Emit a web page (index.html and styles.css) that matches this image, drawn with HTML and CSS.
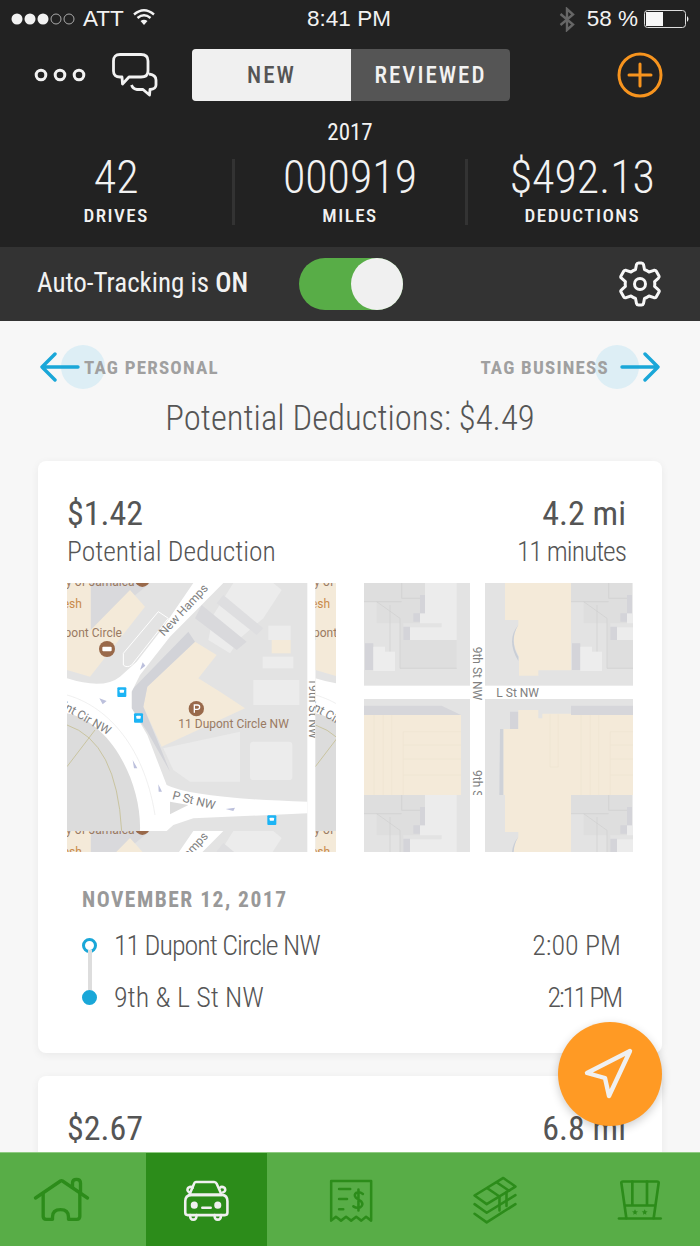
FILE: index.html
```html
<!DOCTYPE html>
<html>
<head>
    <title>Drives</title>
    <link rel="stylesheet" href="styles.css">
</head>
<body>
    <div class="app">
        <!-- Dark header -->
        <header class="top">
            <div class="status">
                <div class="status-left">
                    <svg class="signal" width="66" height="14" viewBox="0 0 66 14">
                        <circle cx="6" cy="7" r="5.5" fill="#f2f2f2"/>
                        <circle cx="19" cy="7" r="5.5" fill="#f2f2f2"/>
                        <circle cx="32" cy="7" r="5.5" fill="#f2f2f2"/>
                        <circle cx="45" cy="7" r="5" fill="none" stroke="#aaa" stroke-width="1"/>
                        <circle cx="58" cy="7" r="5" fill="none" stroke="#aaa" stroke-width="1"/>
                    </svg>
                    <span>ATT</span>
                    <svg class="wifi" width="24" height="18" viewBox="0 0 24 18" fill="none" stroke="#f2f2f2" stroke-width="2.4">
                        <path d="M2 6.5 Q12 -2 22 6.5"/>
                        <path d="M5.5 10 Q12 4.5 18.5 10"/>
                        <path d="M12 17 L8.5 13 Q12 10.5 15.5 13 Z" fill="#f2f2f2" stroke="none"/>
                    </svg>
                </div>
                <div class="status-time">8:41 PM</div>
                <div class="status-right">
                    <svg width="16" height="25" viewBox="0 0 16 25" fill="none" stroke="#666" stroke-width="2.4">
                        <path d="M1.5 7 L14 17.5 L8 23 V2 L14 7.5 L1.5 18"/>
                    </svg>
                    <span>58 %</span>
                    <svg width="46" height="18" viewBox="0 0 46 18">
                        <rect x="0.5" y="0.5" width="41" height="17" rx="3" fill="none" stroke="#ddd"/>
                        <rect x="2" y="2" width="17" height="14" fill="#f7f7f7"/>
                        <path d="M43 6 Q46 9 43 12 Z" fill="#f2f2f2"/>
                    </svg>
                </div>
            </div>

            <div class="nav">
                <svg class="dots" width="52" height="14" viewBox="0 0 52 14" fill="none" stroke="#f2f2f2" stroke-width="3">
                    <circle cx="7" cy="7" r="4.8"/>
                    <circle cx="26" cy="7" r="4.8"/>
                    <circle cx="45" cy="7" r="4.8"/>
                </svg>
                <svg class="chat" width="46" height="44" viewBox="0 0 46 44" fill="none" stroke="#f2f2f2" stroke-width="2.8" stroke-linejoin="round">
                    <path d="M8 1.5 H29 Q36 1.5 36 8 V18 Q36 24 29 24 H17 L10.5 31 L10 24 H8 Q1.5 24 1.5 18 V8 Q1.5 1.5 8 1.5 Z"/>
                    <path d="M37 21 Q44 22 44 27 V32 Q44 36 38 36.5 L37.5 42 L31 36.5 H25 Q21 36 19.5 32"/>
                </svg>
                <div class="segment">
                    <div class="segment-item active">NEW</div>
                    <div class="segment-item">REVIEWED</div>
                </div>
                <svg class="plus" width="46" height="46" viewBox="0 0 46 46" fill="none" stroke="#f7941e" stroke-width="3">
                    <circle cx="23" cy="23" r="21"/>
                    <path d="M23 12 V34 M12 23 H34" stroke-linecap="round"/>
                </svg>
            </div>

            <div class="year">2017</div>
            <div class="stats">
                <div class="stat">
                    <div class="stat-num">42</div>
                    <div class="stat-label">DRIVES</div>
                </div>
                <div class="stat">
                    <div class="stat-num">000919</div>
                    <div class="stat-label">MILES</div>
                </div>
                <div class="stat">
                    <div class="stat-num">$492.13</div>
                    <div class="stat-label">DEDUCTIONS</div>
                </div>
            </div>
        </header>

        <div class="tracking">
            <div class="tracking-text">Auto-Tracking is <b>ON</b></div>
            <div class="toggle"><div class="knob"></div></div>
            <svg class="gear" width="46" height="46" viewBox="0 0 46 46" fill="none" stroke="#f7f7f7" stroke-width="3" stroke-linejoin="round">
                <path d="M18.5 8.5 L19.5 3.5 Q20 2 21.5 2 H24.5 Q26 2 26.5 3.5 L27.5 8.5 Q30 9.5 32 11 L37 9.3 Q38.5 9 39.3 10.2 L42 15 Q42.7 16.2 41.5 17.2 L37.6 20.6 Q38 23 37.6 25.4 L41.5 28.8 Q42.7 29.8 42 31 L39.3 35.8 Q38.5 37 37 36.7 L32 35 Q30 36.5 27.5 37.5 L26.5 42.5 Q26 44 24.5 44 H21.5 Q20 44 19.5 42.5 L18.5 37.5 Q16 36.5 14 35 L9 36.7 Q7.5 37 6.7 35.8 L4 31 Q3.3 29.8 4.5 28.8 L8.4 25.4 Q8 23 8.4 20.6 L4.5 17.2 Q3.3 16.2 4 15 L6.7 10.2 Q7.5 9 9 9.3 L14 11 Q16 9.5 18.5 8.5 Z"/>
                <circle cx="23" cy="23" r="5.5"/>
            </svg>
        </div>

        <!-- Drive list, runs under the tab bar -->
        <main class="list">
            <div class="tags">
                <div class="tag">
                    <svg class="arrow" width="40" height="30" viewBox="0 0 40 30" fill="none" stroke="#1aa7d8" stroke-width="3.4" stroke-linecap="round" stroke-linejoin="round">
                        <path d="M38 15 H3 M15 2 L2 15 L15 28"/>
                    </svg>
                    <div class="tag-ring"></div>
                    <span class="tag-text">TAG PERSONAL</span>
                </div>
                <div class="tag">
                    <span class="tag-text">TAG BUSINESS</span>
                    <div class="tag-ring"></div>
                    <svg class="arrow" width="40" height="30" viewBox="0 0 40 30" fill="none" stroke="#1aa7d8" stroke-width="3.4" stroke-linecap="round" stroke-linejoin="round">
                        <path d="M2 15 H37 M25 2 L38 15 L25 28"/>
                    </svg>
                </div>
            </div>
            <div class="potential">Potential Deductions: $4.49</div>

            <section class="card">
                <div class="card-row big">
                    <span>$1.42</span>
                    <span>4.2 mi</span>
                </div>
                <div class="card-row sub">
                    <span>Potential Deduction</span>
                    <span class="tight">11 minutes</span>
                </div>

                <div class="maps">
                    <svg class="map" width="269" height="269" viewBox="21 24 807 807">
                        <defs>
                            <symbol id="tileA" viewBox="21 24 745 744" width="745" height="744">
                                <rect x="21" y="24" width="745" height="744" fill="#e3e3e3"/>
                                <!-- blocks -->
                                <path d="M92 24 H270 L92 170 Z" fill="#d9d9dc"/>
                                <path d="M21 24 H92 V165 L210 45 L255 95 L90 305 L21 285 Z" fill="#f4ead9"/>
                                <path d="M520 24 H640 L665 45 L610 130 L540 190 L510 235 L445 195 L460 120 Z" fill="#ececec"/>
                                <path d="M425 90 L560 200 L530 225 L405 130 Z" fill="#d9d9dc"/>
                                <path d="M490 60 L610 160 L590 180 L470 85 Z" fill="#dedee0"/>
                                <path d="M405 200 L470 240 L415 310 L480 350 L555 400 L305 515 L250 395 L262 335 Z" fill="#f4ead9"/>
                                <rect x="580" y="315" width="138" height="75" fill="#ececec"/>
                                <rect x="570" y="500" width="127" height="115" rx="10" fill="#ececec"/>
                                <path d="M310 520 L540 470 V620 H390 L340 585 Z" fill="#ebebeb"/>
                                <rect x="625" y="152" width="67" height="43" fill="#ececec"/>
                                <rect x="635" y="195" width="57" height="40" fill="#f4ead9"/>
                                <rect x="608" y="245" width="92" height="35" fill="#ececec"/>
                                <path d="M215 345 L385 170 L405 200 L262 335 L250 395 L300 515 L330 590 L262 470 L215 400 Z" fill="#d2d3d8"/>
                                <path d="M21 400 Q220 440 245 768 H21 Z" fill="#dcdcdc"/>
                                <path d="M21 450 Q170 500 185 768 M21 575 L105 465" fill="none" stroke="#c9c4a0" stroke-width="3"/>
                                <!-- roads -->
                                <path d="M400 24 H490 L330 185 L240 300 L215 350 L215 400 L262 480 L320 630 Q400 670 742 680 V715 L400 730 L340 750 L320 768 H240 C245 620 150 440 21 415 V310 Q130 345 180 305 L230 260 L300 170 Z" fill="#fff"/>
                                <path d="M21 360 C130 390 250 500 285 720" fill="none" stroke="#e8e8e8" stroke-width="2"/>
                                <path d="M330 680 L385 690 L330 718 Z" fill="#dcdcdc"/>
                                <path d="M190 270 V235 L295 110 L325 130 L215 270 Q200 280 190 270 Z" fill="none" stroke="#fff" stroke-width="3"/>
                                <rect x="742" y="24" width="24" height="744" fill="#fff"/>
                                <!-- arrows -->
                                <path d="M240 285 L248 262 L256 272 Z M118 370 L140 378 L128 388 Z M218 555 L232 580 L222 580 Z M295 628 L306 650 L296 650 Z M497 702 L525 698 L520 708 Z" fill="#bcc0dc"/>
                                <!-- labels -->
                                <g class="map-label">
                                    <text class="poi" x="18" y="32">y of Jamaica</text>
                                    <text class="poi" x="-6" y="185">upont Circle</text>
                                    <text class="shop" x="-4" y="98">resh</text>
                                    <text class="poi" x="355" y="460">11 Dupont Circle NW</text>
                                    <text transform="translate(312 185) rotate(-47)">New Hamps</text>
                                    <text transform="translate(5 400) rotate(30)">int Cir NW</text>
                                    <text transform="translate(335 672) rotate(14)">P St NW</text>
                                    <text transform="translate(746 310) rotate(90)">19th St NW</text>
                                </g>
                                <!-- pins -->
                                <circle cx="141" cy="222" r="24" fill="#99694a"/>
                                <rect x="127" y="215" width="28" height="14" rx="3" fill="#fff"/>
                                <circle cx="409" cy="401" r="23" fill="#99694a"/>
                                <path d="M403 413 V390 H412 Q419 390 419 396 Q419 403 412 403 H403" fill="none" stroke="#fff" stroke-width="4"/>
                                <circle cx="247" cy="14" r="22" fill="#99694a"/>
                                <g fill="#1cb4f5">
                                    <rect x="172" y="337" width="27" height="29" rx="3"/>
                                    <rect x="222" y="415" width="27" height="28" rx="3"/>
                                    <rect x="622" y="721" width="27" height="29" rx="3"/>
                                </g>
                                <g fill="#fff">
                                    <rect x="179" y="344" width="13" height="9" rx="2"/>
                                    <rect x="229" y="422" width="13" height="9" rx="2"/>
                                    <rect x="629" y="728" width="13" height="9" rx="2"/>
                                </g>
                            </symbol>
                        </defs>
                        <use href="#tileA" x="21" y="24"/>
                        <use href="#tileA" x="766" y="24"/>
                        <use href="#tileA" x="21" y="768"/>
                        <use href="#tileA" x="766" y="768"/>
                    </svg>

                    <svg class="map" width="269" height="269" viewBox="27 24 807 807">
                        <defs>
                            <symbol id="tileB" viewBox="27 24 621 636" width="621" height="636">
                                <rect x="27" y="24" width="621" height="636" fill="#e3e3e3"/>
                                <!-- top left block -->
                                <path d="M27 24 H240 L210 24 V115 L195 115 V145 H145 V195 H305 V280 H135 V145 H65 V80 H27 Z" fill="#dedede"/>
                                <path d="M210 24 H305 V195 H165 V157 H260 V145 H195 V115 H210 Z" fill="#ececec"/>
                                <path d="M195 60 H210 V115 H195 V140 H175 V115 H195 Z M145 155 H165 V195 H145 Z M30 205 H55 V285 H30 Z" fill="#d4d4d9"/>
                                <path d="M65 80 L135 130 V280 M105 90 V230 M27 80 H140 M140 24 V70 H195" fill="none" stroke="#cfcfcf" stroke-width="2"/>
                                <path d="M55 215 H90 V230 H120 V288 H55 Z" fill="#ededed"/>
                                <path d="M135 280 H305" stroke="#cfcfcf" stroke-width="2"/>
                                <!-- top right block -->
                                <path d="M450 24 H648 V286 H550 V302 H492 V245 Q462 195 490 150 V135 H450 Z" fill="#f4ead9"/>
                                <path d="M490 150 Q452 195 490 258 V245 Q462 195 490 150 Z" fill="#c9ced6"/>
                                <!-- bottom left block -->
                                <path d="M27 392 H260 L318 420 H27 Z" fill="#d6d6da"/>
                                <rect x="27" y="420" width="291" height="240" fill="#f4ead9"/>
                                <path d="M57 420 V660 M85 420 V660 M110 420 V660 M145 470 V660 M145 470 H318 M145 510 H318 M145 552 H318 M145 600 H318" fill="none" stroke="#efe4d2" stroke-width="2"/>
                                <!-- bottom right block -->
                                <path d="M465 410 H490 V462 H435 L465 462 Z" fill="#d4d4d9"/>
                                <path d="M490 405 H550 V430 H562 V416 H648 V660 H445 V462 H490 Z" fill="#f4ead9"/>
                                <path d="M435 462 H445 V660 H433 Z" fill="#cfd2d8"/>
                                <path d="M585 418 V576 H610 V418 M650 418 V660" fill="none" stroke="#efe4d2" stroke-width="2"/>
                                <!-- roads -->
                                <rect x="345" y="24" width="45" height="636" fill="#fff"/>
                                <rect x="27" y="332" width="621" height="40" fill="#fff"/>
                                <g class="map-label">
                                    <text x="424" y="366">L St NW</text>
                                    <text transform="translate(354 215) rotate(90)">9th St NW</text>
                                    <text transform="translate(354 585) rotate(90)">9th St NW</text>
                                </g>
                            </symbol>
                        </defs>
                        <use href="#tileB" x="27" y="24"/>
                        <use href="#tileB" x="648" y="24"/>
                        <use href="#tileB" x="27" y="660"/>
                        <use href="#tileB" x="648" y="660"/>
                    </svg>
                </div>

                <div class="trip">
                    <div class="trip-date">NOVEMBER 12, 2017</div>
                    <div class="trip-row">
                        <span class="pin start"></span>
                        <span class="trip-place tight">11 Dupont Circle NW</span>
                        <span class="trip-time">2:00 PM</span>
                    </div>
                    <div class="trip-row">
                        <span class="pin end"></span>
                        <span class="trip-place">9th &amp; L St NW</span>
                        <span class="trip-time tighter">2:11 PM</span>
                    </div>
                </div>
            </section>

            <section class="card">
                <div class="card-row big">
                    <span>$2.67</span>
                    <span>6.8 mi</span>
                </div>
            </section>

            <div class="fab">
                <svg width="52" height="54" viewBox="0 0 52 54" fill="none" stroke="#f0f0f0" stroke-width="4.4" stroke-linejoin="round">
                    <path d="M46 4 L3 26 L21 31 L25 49 Z"/>
                </svg>
            </div>
        </main>

        <nav class="tabs">
            <div class="tab">
                <svg width="57" height="45" viewBox="40 50 170 135" fill="none" stroke="#2c8c1a" stroke-width="10" stroke-linecap="round" stroke-linejoin="round">
                    <path d="M47 113 L122 62 Q125 60 128 62 L203 113"/>
                    <path d="M70 100 V168 Q70 177 79 177 H98 V170 Q98 148 122 148 Q146 148 146 170 V177 H171 Q180 177 180 168 V100"/>
                    <path d="M158 80 V68 Q158 57 170 57 Q182 57 182 68 V100"/>
                </svg>
            </div>
            <div class="tab active">
                <svg width="47" height="44" viewBox="490 50 146 132" fill="none" stroke="#f0f0f0" stroke-width="8" stroke-linecap="round" stroke-linejoin="round">
                    <path d="M530 60 H587 Q592 60 595 66 L610 100 H510 L524 66 Q526 60 530 60 Z"/>
                    <path d="M515 100 H612 Q628 102 628 120 V155 Q628 163 620 163 H505 Q497 163 497 155 V120 Q497 102 515 100 Z"/>
                    <path d="M510 92 Q500 88 506 78 Q515 72 520 78 M615 92 Q625 88 619 78 Q610 72 605 78"/>
                    <path d="M512 163 Q512 177 522 177 Q532 177 532 163 M588 163 Q588 177 598 177 Q608 177 608 163"/>
                    <path d="M550 140 H576"/>
                    <circle cx="525" cy="132" r="7" fill="#f0f0f0"/>
                    <circle cx="598" cy="132" r="7" fill="#f0f0f0"/>
                </svg>
            </div>
            <div class="tab">
                <svg width="46" height="46" viewBox="50 45 145 140" fill="none" stroke="#2c8c1a" stroke-width="8" stroke-linecap="round" stroke-linejoin="round">
                    <path d="M60 180 V55 H186 V180 L170 168 L155 180 L139 168 L123 180 L107 168 L91 180 L75 168 Z"/>
                    <path d="M85 80 H120 M85 112 H110 M85 144 H98"/>
                    <path d="M160 96 Q150 88 140 92 Q130 98 138 108 L155 120 Q163 130 152 138 Q140 142 130 135 M146 82 V148"/>
                </svg>
            </div>
            <div class="tab">
                <svg width="46" height="50" viewBox="482 42 144 150" fill="none" stroke="#2c8c1a" stroke-width="8" stroke-linecap="round" stroke-linejoin="round">
                    <path d="M490 103 L580 48 L618 75 L528 130 Z"/>
                    <path d="M530 80 L568 106 M560 62 L598 88"/>
                    <path d="M490 130 L528 157 L618 102 M490 160 L528 187 L618 130"/>
                    <path d="M568 106 V150 M590 92 V136"/>
                </svg>
            </div>
            <div class="tab">
                <svg width="46" height="44" viewBox="922 55 138 125" fill="none" stroke="#2c8c1a" stroke-width="8" stroke-linecap="round" stroke-linejoin="round">
                    <path d="M928 173 H1053"/>
                    <path d="M950 172 L935 66 Q935 62 940 62 H1042 Q1047 62 1047 66 L1032 172"/>
                    <path d="M968 62 V132 M1012 62 V132 M948 134 H1034"/>
                    <path d="M976 145 L979 151 L985 152 L980 156 L981 162 L976 159 L971 162 L972 156 L967 152 L973 151 Z M1005 145 L1008 151 L1014 152 L1009 156 L1010 162 L1005 159 L1000 162 L1001 156 L996 152 L1002 151 Z" fill="#2c8c1a" stroke="none"/>
                </svg>
            </div>
        </nav>
    </div>
</body>
</html>
```

FILE: styles.css
```css
body {
    margin: 0;
    padding: 0;
    font-family: "Roboto Condensed", Roboto, "Liberation Sans", sans-serif;
    font-stretch: 75%;
}

.app {
    width: 700px;
    height: 1246px;
    display: flex;
    flex-direction: column;
    overflow: hidden;
    background-color: #f7f7f7;
}

/* header */
.top {
    height: 247px;
    background-color: #222;
    color: #f2f2f2;
}

.status {
    height: 36px;
    padding: 2px 10px 0 11px;
    box-sizing: border-box;
    display: grid;
    grid-template-columns: 1fr auto 1fr;
    align-items: center;
    font-family: "Liberation Sans", sans-serif;
    font-stretch: normal;
    font-size: 22.5px;
}

.status-left {
    display: flex;
    align-items: center;
    gap: 6px;
}

.status-left .wifi {
    margin-left: 2px;
    margin-bottom: 5px;
}

.status-time {
    margin-left: -3px;
}

.status-right {
    display: flex;
    align-items: center;
    justify-content: flex-end;
    gap: 12px;
}

.status-right svg:last-child {
    margin-left: -6px;
}

.nav {
    display: flex;
    align-items: center;
    height: 52px;
    margin-top: 13px;
    padding-left: 34px;
}

.chat {
    margin-left: 26px;
}

.segment {
    display: flex;
    width: 318px;
    height: 52px;
    margin-left: 34px;
    border-radius: 4px;
    overflow: hidden;
    background-color: #555;
    font-size: 23px;
    font-weight: 500;
    letter-spacing: 2px;
}

.segment-item {
    flex: 1;
    display: flex;
    align-items: center;
    justify-content: center;
}

.segment-item.active {
    background-color: #f0f0f0;
    color: #555;
}

.plus {
    margin-left: 107px;
}

.year {
    margin-top: 19px;
    text-align: center;
    font-size: 23px;
    line-height: 26px;
}

.stats {
    display: grid;
    grid-template-columns: repeat(3, 1fr);
    margin: 13px 3px 0 0;
}

.stat {
    text-align: center;
    height: 66px;
    border-left: 3px solid #333;
}

.stat:first-child {
    border-left: none;
}

.stat-num {
    font-size: 46px;
    font-weight: 300;
    line-height: 40px;
    margin-top: -2px;
}

.stat-label {
    margin-top: 8px;
    font-size: 19px;
    line-height: 22px;
    font-weight: 500;
    letter-spacing: 1.5px;
}

/* auto tracking bar */
.tracking {
    height: 74px;
    padding: 0 37px;
    display: flex;
    align-items: center;
    background-color: #333;
    color: #f2f2f2;
    font-size: 27px;
}

.tracking-text {
    width: 262px;
    padding-bottom: 3px;
}

.tracking-text b {
    font-weight: 500;
}

.toggle {
    width: 104px;
    height: 52px;
    border-radius: 26px;
    background-color: #58ad47;
    display: flex;
    justify-content: flex-end;
}

.knob {
    width: 52px;
    height: 52px;
    border-radius: 50%;
    background-color: #f0f0f0;
}

.gear {
    margin-left: auto;
}

/* list */
.list {
    flex: 1;
    min-height: 0;
    position: relative;
    overflow: hidden;
    padding: 23px 38px 0;
}

.tags {
    display: flex;
    justify-content: space-between;
    align-items: center;
    height: 46px;
    margin: 0 2px;
}

.tag {
    display: flex;
    align-items: center;
}

.tag-ring {
    width: 44px;
    height: 44px;
    border-radius: 50%;
    background-color: #ddeef5;
}

.tag:first-child .tag-ring {
    margin: 0 -21px 0 -19px;
}

.tag:last-child .tag-ring {
    margin: 0 -19px 0 -14px;
}

.arrow {
    position: relative;
    z-index: 1;
}

.tag-text {
    position: relative;
    font-size: 19px;
    font-weight: bold;
    letter-spacing: 1.2px;
    color: #a0a0a0;
}

.potential {
    margin-top: 6px;
    text-align: center;
    font-size: 34.7px;
    font-weight: 300;
    line-height: 44px;
    color: #555;
}

.card {
    margin-top: 21px;
    padding: 30px 29px;
    background-color: #fff;
    border-radius: 8px;
    box-shadow: 0 2px 8px rgba(0, 0, 0, 0.06);
    color: #555;
}

.card + .card {
    margin-top: 23px;
}

.card-row {
    display: flex;
    justify-content: space-between;
    margin-right: 7px;
}

.big {
    font-size: 34px;
    line-height: 44px;
}

.sub {
    font-size: 27.5px;
    font-weight: 300;
    line-height: 34px;
}

/* the original face has narrow ones */
.tight {
    letter-spacing: -1px;
}

.tighter {
    letter-spacing: -2.2px;
}

.maps {
    display: flex;
    gap: 28px;
    margin-top: 14px;
}

.map {
    display: block;
}

.map-label {
    font-family: Roboto, sans-serif;
    font-stretch: normal;
    font-size: 36px;
    fill: #808080;
}

.map-label .poi {
    fill: #9a7a62;
}

.map-label .shop {
    fill: #c98a4a;
}

.trip {
    margin-top: 34px;
    padding: 0 12px 0 15px;
}

.trip-date {
    font-size: 21.5px;
    line-height: 28px;
    font-weight: bold;
    letter-spacing: 1.5px;
    color: #999;
}

.trip-row {
    display: flex;
    align-items: center;
    height: 52px;
    font-size: 28px;
    font-weight: 300;
    position: relative;
}

.trip-date + .trip-row {
    margin-top: 5px;
}

.trip-place {
    flex: 1;
    margin-left: 17px;
}

.pin {
    width: 15px;
    height: 15px;
    box-sizing: border-box;
    border-radius: 50%;
    border: 3px solid #1aa7d8;
    background-color: #fff;
    position: relative;
    z-index: 1;
}

.pin.end {
    background-color: #1aa7d8;
}

/* connector between the two stops */
.pin.end::before {
    content: "";
    position: absolute;
    left: 2.5px;
    bottom: 12px;
    width: 4px;
    height: 40px;
    background-color: #ddd;
}

.fab {
    position: absolute;
    left: 558px;
    top: 701px;
    width: 104px;
    height: 104px;
    border-radius: 50%;
    background-color: #ff9a24;
    box-shadow: 0 3px 10px rgba(0, 0, 0, 0.2);
    display: flex;
    align-items: center;
    justify-content: center;
}

/* bottom tabs */
.tabs {
    height: 94px;
    padding-left: 1px;
    display: flex;
    justify-content: space-between;
    background-color: #58ad47;
    border-top: 1px solid #8fcb82;
    box-sizing: border-box;
    position: relative;
}

.tab {
    width: 121px;
    display: flex;
    align-items: center;
    justify-content: center;
}

.tab.active {
    background-color: #2c8c1a;
}
```
